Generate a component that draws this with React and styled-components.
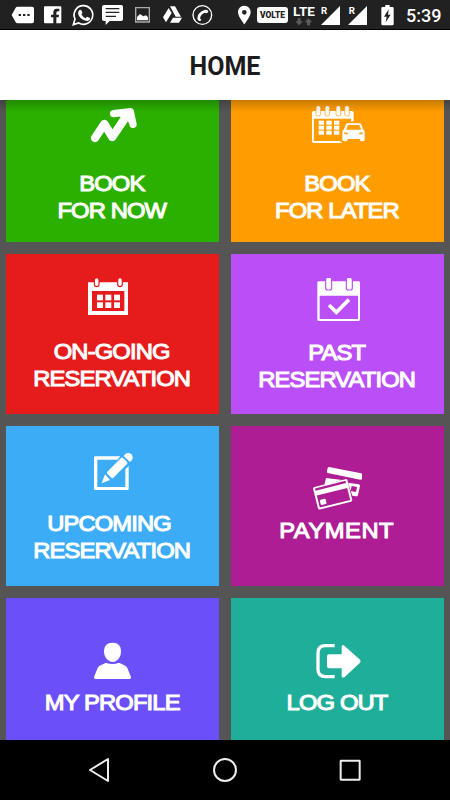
import styled, { createGlobalStyle } from 'styled-components';

function TrendIcon() {
  return (
    <g fill="none" stroke="#fff" strokeLinecap="round" strokeLinejoin="round">
      <path d="M285 129L313 87L337 126L376 68" strokeWidth="25" />
      <path d="M341 56L391 50L399 88" strokeWidth="22" />
      <path d="M362 58L388 54L392 78Z" strokeWidth="14" fill="#fff" />
    </g>
  );
}

function CalendarCarIcon() {
  return (
    <g fill="#fff">
      <path d="M265 48H382Q386 48 386 54V79H378V71H266V138H345L353 144H266Q261 144 261 138V54Q261 48 265 48Z" />
      <path d="M261 68H266V140H261Z" />
      {[280, 307, 340, 366].map(x => (
        <rect key={x} x={x - 7} y="32" width="14" height="31" rx="6" stroke="#ff9d00" strokeWidth="2" />
      ))}
      {[77, 92, 107].map(y => [281, 304, 327].map(x => (
        <rect key={`${x}-${y}`} x={x} y={y} width="16" height="12" />
      )))}
      <path fillRule="evenodd" d="M368 85H403Q408 85 410 90L414 103Q419 106 419 112V134Q419 139 411 139Q404 139 404 132H368Q368 139 360 139Q352 139 352 134V112Q352 106 357 103L362 90Q363 85 368 85ZM369 90L364 104H408L403 90ZM358 112V118H370L367 113ZM401 118H413V112L404 113Z" />
    </g>
  );
}

function CalendarIcon() {
  return (
    <g fill="#fff">
      <path fillRule="evenodd" d="M264 97H384V195H264ZM276 123V183H373V123Z" />
      {[290, 360].map(x => (
        <rect key={x} x={x - 7} y="83" width="14" height="27" rx="7" stroke="#e61b1b" strokeWidth="3.5" />
      ))}
      {[134, 157].map(y => [291, 316, 342].map(x => (
        <rect key={`${x}-${y}`} x={x} y={y} width="18" height="17" />
      )))}
    </g>
  );
}

function CalendarCheckIcon() {
  return (
    <g fill="#fff">
      <path fillRule="evenodd" d="M281 94H401Q405 94 405 98V208Q405 213 401 213H281Q277 213 277 208V98Q277 94 281 94ZM284 137V207H399V137Z" />
      {[311, 373].map(x => (
        <rect key={x} x={x - 9} y="82" width="18" height="38" rx="6" stroke="#bb4ff7" strokeWidth="3.5" />
      ))}
      <path d="M312 165L334 187L372 149" fill="none" stroke="#fff" strokeWidth="11" />
    </g>
  );
}

function EditIcon() {
  return (
    <g fill="#fff">
      <path d="M361 109L352 119H292V201H376V148L386 138V206Q386 210 382 210H286Q282 210 282 206V113Q282 109 286 109Z" />
      <path d="M363 114Q366 111 369 114L381 126Q384 129 381 132L340 173Q337 176 334 173L322 161Q319 158 322 155Z" />
      <path d="M371 108L376 102Q385 95 394 103Q402 112 395 121L390 126Z" />
      <path d="M315 163L330 180L305 190Z" />
    </g>
  );
}

function CardsIcon() {
  return (
    <g fill="#fff">
      <path d="M312 141L408 160Q412 161 411 165V176Q410 180 406 179L308 159Q305 158 306 154L308 144Q309 141 312 141Z" />
      <path d="M303 174L352 180L298 195Z" />
      <path fillRule="evenodd" d="M369 188L401 193Q405 194 405 198L399 225Q398 230 393 229L382 227ZM380 198L377 213L393 216L396 201Z" />
      <g transform="rotate(-14 323 223)">
        <path fillRule="evenodd" d="M275 188H371Q376 188 376 193V253Q376 258 371 258H275Q270 258 270 253V193Q270 188 275 188ZM276 193V200H370V193ZM276 215V252H370V215Z" />
        <rect x="281" y="230" width="18" height="16" rx="3" />
      </g>
    </g>
  );
}

function UserIcon() {
  return (
    <g fill="#fff">
      <path d="M338 158C354 158 363 168 363 184C363 202 352 216 338 216C324 216 312 202 312 184C312 168 321 158 338 158Z" />
      <path d="M318 218Q337 226 357 218L376 227Q380 229 382 234L393 261Q394 267 388 267H287Q281 267 282 261L293 234Q295 229 299 227Z" />
    </g>
  );
}

function LogoutIcon() {
  return (
    <g fill="#fff">
      <path d="M329 167H302Q279 167 279 189V238Q279 260 302 260H329" fill="none" stroke="#fff" strokeWidth="10" />
      <path d="M312 193H350V171Q350 164 355 165L358 167L405 209Q409 213 405 218L359 261Q350 266 350 257V235H312Q306 235 306 229V199Q306 193 312 193Z" />
    </g>
  );
}

// top: space above the icon, view: first line and height of the icon's view box
const tiles = [
  { lines: ['BOOK', 'FOR NOW'], color: '#2bb000', Icon: TrendIcon, top: 23, view: [30, 120], gap: 25 },
  { lines: ['BOOK', 'FOR LATER'], color: '#ff9d00', Icon: CalendarCarIcon, top: 23, view: [30, 120], gap: 25 },
  { lines: ['ON-GOING', 'RESERVATION'], color: '#e61b1b', Icon: CalendarIcon, top: 23, view: [81, 135], gap: 16 },
  { lines: ['PAST', 'RESERVATION'], color: '#bb4ff7', Icon: CalendarCheckIcon, top: 23, view: [81, 135], gap: 17 },
  { lines: ['UPCOMING', 'RESERVATION'], color: '#3dacf7', Icon: EditIcon, top: 26, view: [96, 120], gap: 18, shift: 5 },
  { lines: ['PAYMENT'], color: '#ae1d93', Icon: CardsIcon, top: 40, view: [138, 135], gap: 6, spacing: '0.5px' },
  { lines: ['MY PROFILE'], color: '#6b4ff8', Icon: UserIcon, top: 44, view: [156, 114], gap: 9 },
  { lines: ['LOG OUT'], color: '#1fae99', Icon: LogoutIcon, top: 44, view: [156, 114], gap: 9 },
];

function StatusBar() {
  return (
    <Status>
      <StatusIcons width="225" height="29" viewBox="0 0 675 87">
        <path fillRule="evenodd" d="M53 20H96Q102 20 102 26V64Q102 70 96 70H53Q49 70 47 67L35 45L47 23Q49 20 53 20ZM56 42V48H63V42ZM69 42V48H76V42ZM82 42V48H89V42Z" />
        <path d="M135 19H181Q184 19 184 22V67Q184 70 181 70H169V52H176L177 44H169V39Q169 34 174 34H178V26H170Q160 26 160 38V44H153V52H160V70H135Q132 70 132 67V22Q132 19 135 19Z" />
        <path d="M220 74L225 57A28 28 0 1 1 236 69Z" fill="none" stroke="#fff" strokeWidth="5" />
        <path d="M237 31Q241 27 244 31L247 38Q247 41 244 43Q248 51 257 55L261 50L270 54Q271 61 263 63Q252 64 241 53Q230 42 237 31Z" />
        <path fillRule="evenodd" d="M312 15H364Q369 15 369 20V58Q369 63 364 63H329L317 75V63H312Q306 63 306 58V20Q306 15 312 15ZM317 24V28H358V24ZM317 35V39H358V35ZM317 47V51H348V47Z" />
        <path d="M407 23H448V66H407Z" fill="none" stroke="#aaa" strokeWidth="4" />
        <path d="M411 61V51L420 42L430 49L438 46L444 52V61Z" />
        <path d="M510 19H525L543 50H527ZM506 24L515 39L498 67L489 52ZM519 53H546L537 68H510Z" />
        <circle cx="607" cy="45" r="28" fill="none" stroke="#fff" strokeWidth="4" />
        <path d="M613 30Q620 27 625 33Q625 40 618 40L614 38Q602 43 600 55L604 59Q602 65 596 62L592 57Q592 38 613 30Z" />
      </StatusIcons>
      <StatusIcons width="32" height="29" viewBox="675 0 96 87">
        <path fillRule="evenodd" d="M733 17C745 17 752 26 752 37C752 50 733 73 733 73C733 73 714 50 714 37C714 26 721 17 733 17ZM733 30A7 7 0 1 0 733 44A7 7 0 1 0 733 30Z" />
      </StatusIcons>
      <Volte>VOLTE</Volte>
      <Network>
        LTE
        <svg width="20" height="8" viewBox="0 0 60 24">
          <path d="M11 1H20V10H27L15 22L4 10H11ZM39 22H48V13H55L43 1L32 13H39Z" fill="#5c5c5c" />
        </svg>
      </Network>
      <StatusIcons width="76" height="29" viewBox="285 0 228 87">
        <path d="M345 18V75H288ZM426 18V75H369Z" />
        <SignalText x="288" y="43">R</SignalText>
        <SignalText x="371" y="43">R</SignalText>
        <path fillRule="evenodd" d="M481 15H494V21H502Q506 21 506 25V72Q506 76 502 76H473Q469 76 469 72V25Q469 21 473 21H481ZM491 28L477 50H485L482 67L497 44H489Z" />
      </StatusIcons>
      <Clock>5:39</Clock>
    </Status>
  );
}

function App() {
  return (
    <Screen>
      <GlobalStyle />
      <StatusBar />
      <Header>HOME</Header>
      <Main>
        <Grid>
          {tiles.map(({ lines, color, Icon, top, view, gap, spacing, shift }) => (
            <Tile key={lines.join(' ')} $color={color} $top={top}>
              <svg width="75" height={view[1] / 3} viewBox={`225 ${view[0]} 225 ${view[1]}`}>
                <Icon />
              </svg>
              <Label $gap={gap} $spacing={spacing}>
                {lines.map((line, i) => (
                  <Line key={line} $shift={i === 0 ? shift : 0}>{line}</Line>
                ))}
              </Label>
            </Tile>
          ))}
        </Grid>
      </Main>
      <NavBar>
        <svg width="24" height="26" viewBox="267 501 72 78">
          <path d="M327 507V573L273 540Z" />
        </svg>
        <svg width="26" height="26" viewBox="0 0 78 78">
          <circle cx="39" cy="39" r="33" />
        </svg>
        <svg width="24" height="26" viewBox="339 501 72 78">
          <rect x="347" y="512" width="57" height="57" rx="1" />
        </svg>
      </NavBar>
    </Screen>
  );
}

export default App;

/***************************************************************
                        Styled Components
***************************************************************/
const GlobalStyle = createGlobalStyle`
  body {
    margin: 0;
    background: #000;
    overflow: hidden;
  }

  svg {
    display: block;
    flex-shrink: 0;
  }
`

const Screen = styled.div`
  display: flex;
  flex-direction: column;
  width: 450px;
  height: 800px;
  background: #000;
  font-family: Roboto, "Liberation Sans", sans-serif;
`

const Status = styled.div`
  display: flex;
  flex-shrink: 0;
  height: 29px;
  margin-bottom: 1px;
  background: #212121;
  color: #fff;
  overflow: hidden;
`

const StatusIcons = styled.svg`
  fill: #fff;
`

const Volte = styled.span`
  width: 31px;
  height: 16px;
  margin-top: 7px;
  border-radius: 3px;
  background: #fff;
  color: #212121;
  font-size: 8.4px;
  font-weight: 900;
  line-height: 16px;
  text-align: center;
`

const Network = styled.span`
  display: flex;
  flex-direction: column;
  align-items: center;
  width: 22px;
  margin: 4px 5px 0;
  font-size: 13.5px;
  font-weight: 700;
  line-height: 14px;
`

const SignalText = styled.text`
  font-size: 29px;
  font-weight: 700;
`

const Clock = styled.span`
  margin-left: 10px;
  font-size: 18px;
  font-weight: 500;
  line-height: 32px;
`

const Header = styled.header`
  box-sizing: border-box;
  flex: 0 0 70px;
  padding-top: 3px;
  background: #fff;
  color: #1c1c1c;
  font-size: 25px;
  font-weight: 700;
  line-height: 67px;
  text-align: center;
`

const Main = styled.main`
  display: flex;
  flex-direction: column;
  height: 640px;
  overflow: hidden;
  background: #555;
  position: relative;

  /* shadow the header drops on the tiles */
  &::before {
    content: '';
    position: absolute;
    inset: 0 0 auto;
    height: 12px;
    background: linear-gradient(rgba(0, 0, 0, 0.22), transparent);
  }
`

const Grid = styled.div`
  display: grid;
  grid-template-columns: 213px 213px;
  grid-auto-rows: 160px;
  gap: 12px;
  margin: -18px 6px 0;
`

const Tile = styled.div`
  display: flex;
  flex-direction: column;
  align-items: center;
  box-sizing: border-box;
  padding-top: ${props => props.$top}px;
  background: ${props => props.$color};
`

const Label = styled.div`
  margin: ${props => props.$gap}px 1px 0 0;
  color: #fff;
  font-family: "Liberation Sans", Arial, sans-serif;
  font-size: 22.6px;
  -webkit-text-stroke: 1.1px #fff;
  line-height: 27px;
  letter-spacing: ${props => props.$spacing || '-0.8px'};
  text-align: center;
  white-space: nowrap;
  transform: scaleX(1.05);
`

const Line = styled.div`
  padding-right: ${props => props.$shift || 0}px;
`

const NavBar = styled.nav`
  display: flex;
  flex-shrink: 0;
  justify-content: center;
  align-items: center;
  gap: 100px;
  height: 60px;
  background: #000;

  path, circle, rect {
    fill: none;
    stroke: #eee;
    stroke-width: 6px;
    stroke-linejoin: round;
  }
`
